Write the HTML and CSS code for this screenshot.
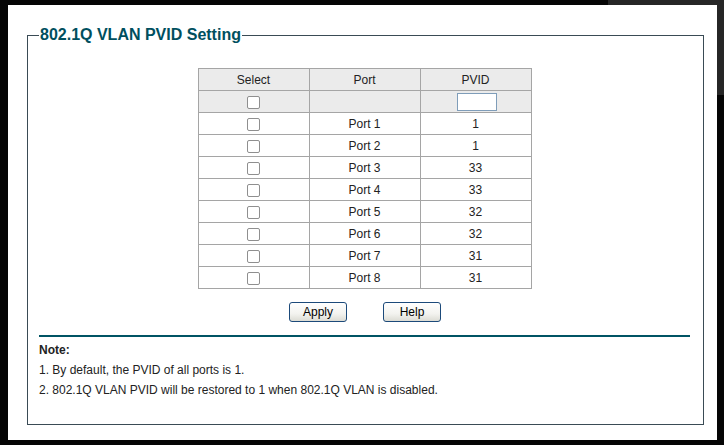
FILE: index.html
```html
<!DOCTYPE html>
<html lang="en">
<head>
  <meta charset="UTF-8" />
  <title>802.1Q VLAN PVID Setting</title>
  <link rel="stylesheet" href="styles.css">
</head>
<body>
  <div class="topbar"></div>
  <div class="panel">
    <fieldset class="box">
      <legend>802.1Q VLAN PVID Setting</legend>

      <table class="pvid-table">
        <tr class="head">
          <th>Select</th>
          <th>Port</th>
          <th>PVID</th>
        </tr>
        <tr class="filter">
          <td><span class="check"></span></td>
          <td></td>
          <td><span class="field"></span></td>
        </tr>
        <tr><td><span class="check"></span></td><td>Port 1</td><td>1</td></tr>
        <tr><td><span class="check"></span></td><td>Port 2</td><td>1</td></tr>
        <tr><td><span class="check"></span></td><td>Port 3</td><td>33</td></tr>
        <tr><td><span class="check"></span></td><td>Port 4</td><td>33</td></tr>
        <tr><td><span class="check"></span></td><td>Port 5</td><td>32</td></tr>
        <tr><td><span class="check"></span></td><td>Port 6</td><td>32</td></tr>
        <tr><td><span class="check"></span></td><td>Port 7</td><td>31</td></tr>
        <tr><td><span class="check"></span></td><td>Port 8</td><td>31</td></tr>
      </table>

      <div class="buttons">
        <button class="btn">Apply</button>
        <button class="btn">Help</button>
      </div>

      <div class="note">
        <div class="note-title">Note:</div>
        <p>1. By default, the PVID of all ports is 1.</p>
        <p>2. 802.1Q VLAN PVID will be restored to 1 when 802.1Q VLAN is disabled.</p>
      </div>
    </fieldset>
  </div>
</body>
</html>
```

FILE: styles.css
```css
* {
  margin: 0;
  padding: 0;
  box-sizing: border-box;
  font-family: 'Liberation Sans', Arial, sans-serif;
}

body {
  background: #050505;
  width: 724px;
  height: 445px;
  overflow: hidden;
  position: relative;
}

.topbar {
  position: absolute;
  top: 0;
  right: 0;
  width: 116px;
  height: 95px;
  background: #262626;
}

.panel {
  position: relative;
  margin: 5px 7px 0 8px;
  width: 709px;
  height: 435px;
  background: #fff;
  padding: 21px 0 0 19px;
}

.box {
  width: 677px;
  height: 399px;
  border: 1px solid #3a4b55;
  padding: 0 13px 0 11px;
}

.box legend {
  color: #004f5e;
  font-size: 16px;
  font-weight: bold;
  line-height: 18px;
  padding: 0 1px;
}

.pvid-table {
  margin: 24px auto 0;
  width: 334px;
  border-collapse: collapse;
  font-size: 12px;
  color: #222;
}

.pvid-table th,
.pvid-table td {
  border: 1px solid #a5a5a5;
  height: 22px;
  width: 111px;
  text-align: center;
  font-weight: normal;
  vertical-align: middle;
}

.pvid-table .head,
.pvid-table .filter {
  background: #ebebeb;
}

.check {
  display: inline-block;
  width: 13px;
  height: 13px;
  border: 1px solid #8f8f8f;
  border-radius: 2px;
  background: #fff;
  vertical-align: middle;
}

.field {
  display: inline-block;
  width: 40px;
  height: 18px;
  border: 1px solid #7f9db9;
  background: #fff;
  vertical-align: middle;
  margin-left: 2px;
}

.buttons {
  display: flex;
  justify-content: center;
  gap: 36px;
  margin-top: 13px;
  padding-left: 1px;
}

.btn {
  width: 58px;
  height: 20px;
  font-size: 12px;
  color: #000;
  border: 1px solid #1c4a7a;
  border-radius: 3px;
  background: linear-gradient(#ffffff, #f3f3ef 60%, #dcdcd4);
}

.note {
  margin-top: 13px;
  border-top: 2px solid #005464;
  font-size: 12px;
  color: #222;
}

.note-title {
  font-weight: bold;
  margin-top: 6px;
  line-height: 14px;
}

.note p {
  margin-top: 6px;
  line-height: 14px;
}
```
